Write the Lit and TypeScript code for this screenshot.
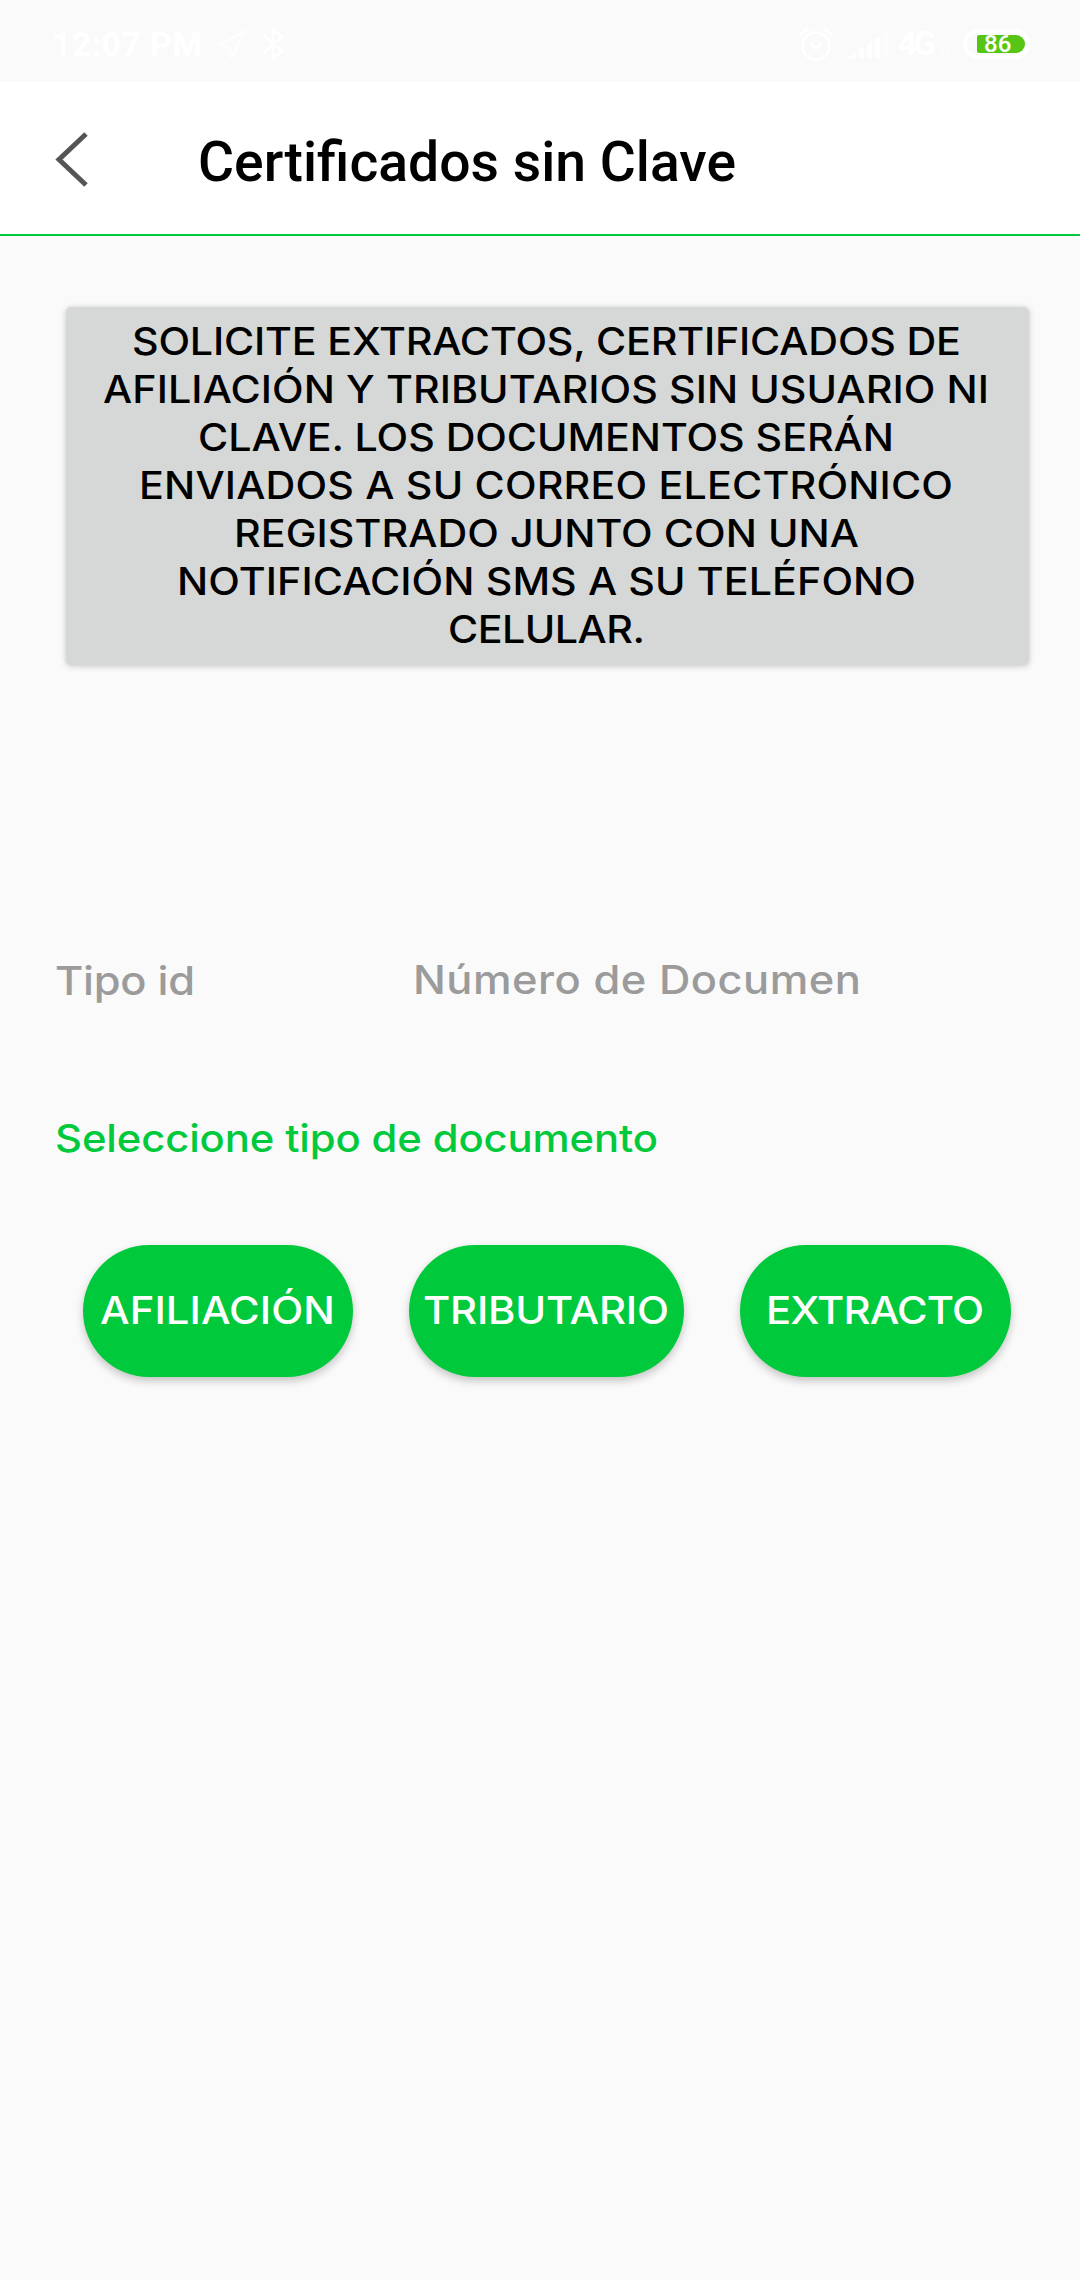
import { LitElement, html, css, svg } from "lit";
import { customElement, property, query } from "lit/decorators.js";

/**
 * A single line of text that fills a given width: by tracking (after an optional
 * widening), or by scaling alone, which keeps the font's ligatures.
 */
@customElement("fit-line")
class FitLine extends LitElement {
  @property() text = "";
  @property({ type: Number }) width = 0;
  @property({ type: Number }) stretch = 1;
  @property({ type: Boolean }) ligatures = false;
  @query(".t") span!: HTMLElement;

  static styles = css`
    :host { display: block; white-space: nowrap; flex: none; }
    .t { display: inline-block; white-space: pre; transform-origin: 0 50%; }
  `;

  updated() {
    const s = this.span.style;
    s.letterSpacing = "normal";
    s.transform = "none";
    const natural = this.span.getBoundingClientRect().width;
    if (this.ligatures) {
      s.transform = `scaleX(${this.width / natural})`;
      s.marginRight = `${this.width - natural}px`;
      return;
    }
    const gap = (this.width / this.stretch - natural) / (this.text.length - 1);
    s.letterSpacing = `${gap}px`;
    s.marginRight = `${this.width - this.width / this.stretch - gap}px`;
    if (this.stretch !== 1) s.transform = `scaleX(${this.stretch})`;
  }

  render() {
    return html`<span class="t">${this.text}</span>`;
  }
}

@customElement("status-bar")
class StatusBar extends LitElement {
  static styles = css`
    :host {
      display: flex; align-items: center; height: 82px; box-sizing: border-box;
      padding: 0 50px 0 52px; background: #fafafa; color: #fff;
      font-family: Roboto, sans-serif; font-weight: 700;
    }
    svg { display: block; flex: none; }
    .time { font-size: 34px; line-height: 40px; margin-top: 6px; }
    .nav { margin: 7px 0 0 15px; }
    .bt { margin: 6px 0 0 16px; }
    .right { display: flex; align-items: center; margin-left: auto; }
    .alarm { margin-top: 6px; }
    .signal { margin: 7px 0 0 14px; }
    .net { font-size: 33px; line-height: 40px; margin: 6px 0 0 8px; }
    .data { margin: 18px 0 0 4px; }
    .battery {
      box-sizing: border-box; width: 67px; height: 30px; border-radius: 15px;
      border: 4px solid #fff; margin: 6px 0 0 12px; padding: 2px 1px 2px 10px;
    }
    .level {
      display: flex; align-items: center; width: 48px; height: 18px;
      background: #57c516; border-radius: 2px 9px 9px 2px;
      font-size: 24px; font-weight: 500; line-height: 28px;
      box-sizing: border-box; padding-left: 7px;
    }
  `;

  render() {
    return html`
      <fit-line class="time" text="12:07 PM" .width=${150}></fit-line>
      <svg class="nav" width="30" height="32" viewBox="0 0 30 32">
        ${svg`<path d="M28 2 L3 16 L12 18.5 L14.5 29 Z" fill="none" stroke="#fdfdfd" stroke-width="3" stroke-linejoin="round"/>`}
      </svg>
      <svg class="bt" width="22" height="34" viewBox="0 0 22 34">
        ${svg`<path d="M1 9 L19 24 L10 32 V2 L19 10 L1 25" fill="none" stroke="#fff" stroke-width="2.6"/>`}
      </svg>
      <div class="right">
        <svg class="alarm" width="36" height="34" viewBox="0 0 36 34">
          ${svg`<g fill="none" stroke="#fff" stroke-linecap="round">
            <circle cx="18" cy="19" r="13.5" stroke-width="2.8"/>
            <path d="M13 17 L18 21.5 L23 17" stroke-width="2.8"/>
            <path d="M2 8 L9 2 M27 2 L34 8" stroke-width="3"/></g>`}
        </svg>
        <svg class="signal" width="42" height="28" viewBox="0 0 42 28">
          ${svg`<path fill="#fff" d="M0 27 L8 21 V27 Z M11 18.5 L16 15 V27 H11 Z M19 13.5 L24 10 V27 H19 Z M27 8 L32 5 V27 H27 Z"/>
          <rect x="35" y="1" width="5" height="26" fill="#fcfcfc"/>`}
        </svg>
        <fit-line class="net" text="4G" .width=${38}></fit-line>
        <svg class="data" width="11" height="14" viewBox="0 0 11 14">
          ${svg`<path d="M2.5 1 V12 M8 1 V12" stroke="#fcfcfc" stroke-width="2.5"/>`}
        </svg>
        <div class="battery"><div class="level">86</div></div>
      </div>
    `;
  }
}

interface Line { text: string; width: number; }

const WIDEN = 1.1;

const NOTICE: Line[] = [
  { text: "SOLICITE EXTRACTOS, CERTIFICADOS DE", width: 829 },
  { text: "AFILIACIÓN Y TRIBUTARIOS SIN USUARIO NI", width: 886 },
  { text: "CLAVE. LOS DOCUMENTOS SERÁN", width: 696 },
  { text: "ENVIADOS A SU CORREO ELECTRÓNICO", width: 814 },
  { text: "REGISTRADO JUNTO CON UNA", width: 625 },
  { text: "NOTIFICACIÓN SMS A SU TELÉFONO", width: 739 },
  { text: "CELULAR.", width: 197 },
];

const ACTIONS = [
  { text: "AFILIACIÓN", width: 235, box: 270 },
  { text: "TRIBUTARIO", width: 246, box: 275 },
  { text: "EXTRACTO", width: 218, box: 271 },
];

@customElement("app-root")
class AppRoot extends LitElement {
  static styles = css`
    :host {
      display: block; width: 1080px; height: 2280px; overflow: hidden;
      background: #fafafa; font-family: Inter, "Open Sans", sans-serif; font-weight: 500;
    }
    .header {
      display: flex; align-items: center; box-sizing: border-box; height: 154px;
      padding-left: 54px; background: #fff; border-bottom: 2px solid #00c93c;
    }
    .back { display: block; flex: none; margin-top: 1px; }
    .title {
      margin: 8px 0 0 108px; color: #000;
      font: 500 55px/64px Roboto, sans-serif;
    }
    .notice {
      display: flex; flex-direction: column; align-items: center; box-sizing: border-box;
      width: 963px; height: 358px; margin: 71px 0 0 65.500px; padding: 11px 2px 0 0;
      background: #d6d8d7; border-radius: 5px; color: #000;
      box-shadow: 0 1px 6px rgba(0, 0, 0, 0.22);
      font-size: 37.5px; line-height: 48px;
    }
    .fields {
      display: flex; margin: 288px 0 0 55px; color: #9b9b9b;
      font-size: 39.5px; line-height: 54px;
    }
    .kind { width: 358px; padding-top: 1px; }
    .label {
      margin: 105px 0 0 55px; color: #00c93c; font-size: 38px; line-height: 50px;
    }
    .actions { display: flex; gap: 56px; margin: 82px 0 0 83px; }
    .btn {
      display: flex; align-items: center; justify-content: center; height: 132px;
      border: 0; padding: 0 1px 2px 0; border-radius: 66px; box-sizing: border-box;
      background: #00c93c; color: #fff;
      font: 500 38px/48px Inter, "Open Sans", sans-serif;
      box-shadow: 0 4px 8px rgba(0, 0, 0, 0.22);
    }
  `;

  render() {
    return html`
      <status-bar></status-bar>
      <header class="header">
        <svg class="back" width="36" height="56" viewBox="0 0 36 56">
          ${svg`<path d="M32 3 L5 28.5 L32 54" fill="none" stroke="#555" stroke-width="5"/>`}
        </svg>
        <fit-line class="title" ligatures text="Certificados sin Clave" .width=${538}></fit-line>
      </header>
      <section class="notice">
        ${NOTICE.map((l) => html`<fit-line .text=${l.text} .width=${l.width} .stretch=${WIDEN}></fit-line>`)}
      </section>
      <div class="fields">
        <div class="kind"><fit-line text="Tipo id" .width=${140} .stretch=${WIDEN}></fit-line></div>
        <fit-line text="Número de Documen" .width=${448} .stretch=${WIDEN}></fit-line>
      </div>
      <fit-line class="label" text="Seleccione tipo de documento" .width=${603} .stretch=${WIDEN}></fit-line>
      <div class="actions">
        ${ACTIONS.map((a) => html`
          <button class="btn" style="width:${a.box}px">
            <fit-line .text=${a.text} .width=${a.width} .stretch=${WIDEN}></fit-line>
          </button>`)}
      </div>
    `;
  }
}
